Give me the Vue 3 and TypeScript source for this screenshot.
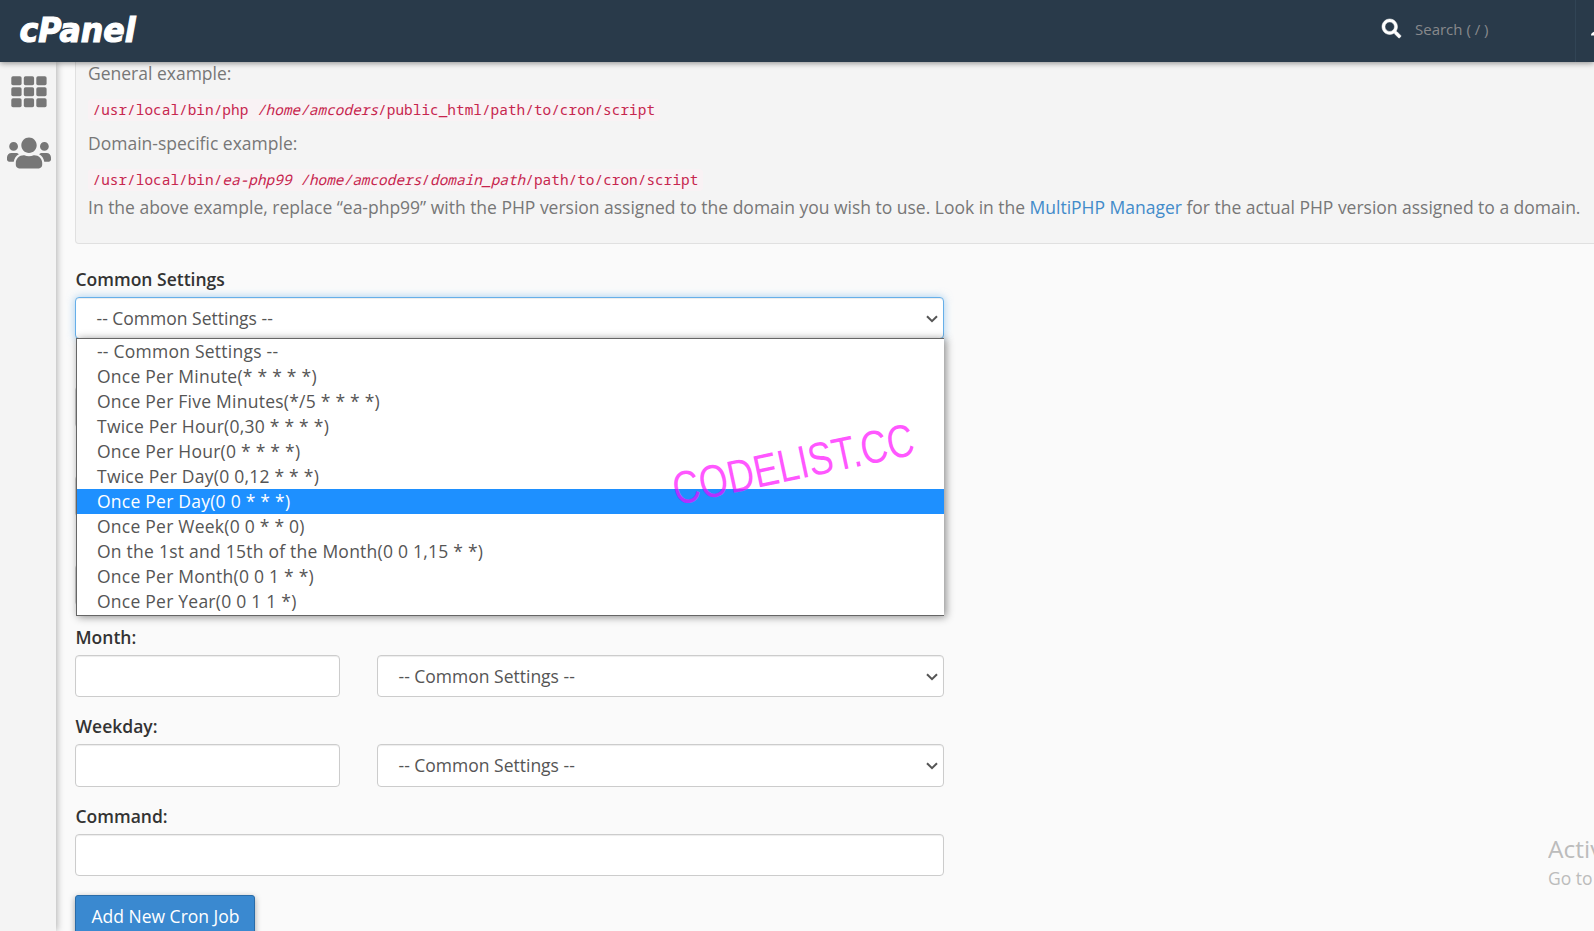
<script setup lang="ts">
const placeholder = '-- Common Settings --'

const options: string[] = [
  '-- Common Settings --',
  'Once Per Minute(* * * * *)',
  'Once Per Five Minutes(*/5 * * * *)',
  'Twice Per Hour(0,30 * * * *)',
  'Once Per Hour(0 * * * *)',
  'Twice Per Day(0 0,12 * * *)',
  'Once Per Day(0 0 * * *)',
  'Once Per Week(0 0 * * 0)',
  'On the 1st and 15th of the Month(0 0 1,15 * *)',
  'Once Per Month(0 0 1 * *)',
  'Once Per Year(0 0 1 1 *)',
]
const highlighted = 6
</script>

<template>
  <div class="page">
    <header class="topbar">
      <svg class="logo" width="130" height="40" viewBox="0 0 130 40" role="img" aria-label="cPanel">
        <text x="1.500" y="31.500" textLength="116" lengthAdjust="spacingAndGlyphs">cPanel</text>
      </svg>
      <div class="search">
        <svg width="19" height="19" viewBox="0 0 512 512"><path fill="#fff" stroke="#fff" stroke-width="14" d="M505 442.7L405.3 343c-4.500-4.500-10.600-7-17-7H372c27.600-35.300 44-79.700 44-128C416 93.100 322.900 0 208 0S0 93.100 0 208s93.100 208 208 208c48.300 0 92.700-16.400 128-44v16.300c0 6.400 2.500 12.500 7 17l99.700 99.700c9.400 9.400 24.600 9.400 33.900 0l28.300-28.300c9.400-9.400 9.400-24.600.1-34zM208 336c-70.700 0-128-57.200-128-128 0-70.700 57.200-128 128-128 70.700 0 128 57.200 128 128 0 70.700-57.200 128-128 128z" /></svg>
        <span>Search ( / )</span>
      </div>
      <div class="account">
        <svg width="19" height="19" viewBox="0 0 19 19"><path fill="#fff" d="M0 18.500C0 16 2.500 15 7 13C6 11 5 9 5 6a4.500 5 0 0 1 9 0c0 3-1 5-2 7c4.500 2 7 3 7 5.500z" /></svg>
      </div>
    </header>

    <div class="body">
      <nav class="sidebar">
        <svg class="grid-icon" width="36" height="32" viewBox="0 0 36 32" fill="#777">
          <template v-for="r in 3" :key="r">
            <rect v-for="c in 3" :key="c" :x="(c - 1) * 12.5 + 0.3" :y="(r - 1) * 11 + 0.3" width="10.3" height="9" rx="1.700" />
          </template>
        </svg>
        <svg class="users-icon" width="44" height="36" viewBox="0 0 640 512"><path fill="#777" d="M96 224c35.300 0 64-28.700 64-64s-28.700-64-64-64-64 28.700-64 64 28.700 64 64 64zm448 0c35.300 0 64-28.700 64-64s-28.700-64-64-64-64 28.700-64 64 28.700 64 64 64zm32 32h-64c-17.600 0-33.500 7.100-45.100 18.600 40.300 22.100 68.900 62 75.100 109.400h66c17.700 0 32-14.300 32-32v-32c0-35.300-28.700-64-64-64zm-256 0c61.900 0 112-50.100 112-112S381.900 32 320 32 208 82.100 208 144s50.100 112 112 112zm76.800 32h-8.300c-20.800 10-43.900 16-68.500 16s-47.600-6-68.500-16h-8.300C179.600 288 128 339.600 128 403.200V432c0 26.500 21.500 48 48 48h288c26.500 0 48-21.500 48-48v-28.800c0-63.600-51.600-115.200-115.200-115.200zm-223.700-13.400C161.500 263.100 145.600 256 128 256H64c-35.300 0-64 28.700-64 64v32c0 17.700 14.300 32 32 32h65.900c6.300-47.400 34.900-87.300 75.200-109.400z" /></svg>
      </nav>

      <main class="content">
        <section class="well">
          <p class="line first">General example:</p>
          <div class="code-row"><code>/usr/local/bin/php <em>/home/amcoders</em>/public_html/path/to/cron/script</code></div>
          <p class="line">Domain-specific example:</p>
          <div class="code-row second"><code>/usr/local/bin/<em>ea-php99</em> <em>/home/amcoders</em>/<em>domain_path</em>/path/to/cron/script</code></div>
          <p class="line note">In the above example, replace “ea-php99” with the PHP version assigned to the domain you wish to use. Look in the <a>MultiPHP Manager</a> for the actual PHP version assigned to a domain.</p>
        </section>

        <form class="form" @submit.prevent>
          <label class="label">Common Settings</label>
          <div class="picker">
            <div class="control select focused">
              <span>{{ placeholder }}</span>
              <svg class="chev" width="12" height="8" viewBox="0 0 12 8"><path d="M1 1.200L6 6.200L11 1.200" /></svg>
            </div>
            <ul class="menu">
              <li v-for="(o, i) in options" :key="o" :class="{ on: i === highlighted }">{{ o }}</li>
            </ul>
            <div class="stub s1"></div>
            <div class="stub s2"></div>
            <div class="stub s3"></div>
          </div>

          <label class="label month">Month:</label>
          <div class="row">
            <div class="control"></div>
            <div class="control select">
              <span>{{ placeholder }}</span>
              <svg class="chev" width="12" height="8" viewBox="0 0 12 8"><path d="M1 1.200L6 6.200L11 1.200" /></svg>
            </div>
          </div>

          <label class="label weekday">Weekday:</label>
          <div class="row tall">
            <div class="control"></div>
            <div class="control select">
              <span>{{ placeholder }}</span>
              <svg class="chev" width="12" height="8" viewBox="0 0 12 8"><path d="M1 1.200L6 6.200L11 1.200" /></svg>
            </div>
          </div>

          <label class="label command">Command:</label>
          <div class="control"></div>
          <button class="submit">Add New Cron Job</button>
        </form>
      </main>
    </div>

    <div class="stamp">CODELIST.CC</div>
    <div class="activate">
      <div class="big">Activate Windows</div>
      <div class="small">Go to Settings to activate Windows.</div>
    </div>
  </div>
</template>

<style>
body {
  overflow: hidden;
}
</style>

<style scoped>
.page {
  position: relative;
  width: 1594px;
  height: 931px;
  overflow: hidden;
  background: #fafafa;
  font-family: 'Open Sans', 'Noto Sans', sans-serif;
  font-size: 17.5px;
  color: #555;
}
.page * {
  box-sizing: border-box;
}
.topbar {
  position: relative;
  z-index: 3;
  display: flex;
  height: 62px;
  background: #293a4a;
  box-shadow: 0 1px 6px rgba(0, 0, 0, 0.45);
}
.logo {
  flex: none;
  margin: 10px 0 0 18px;
}
.logo text {
  font-family: 'DejaVu Sans', sans-serif;
  font-weight: 700;
  font-style: italic;
  font-size: 33px;
  fill: #fff;
  stroke: #fff;
  stroke-width: 1.2px;
}
.search {
  display: flex;
  align-items: flex-start;
  width: 193px;
  margin-left: auto;
  padding-top: 19px;
}
.search svg {
  overflow: visible;
}
.search span {
  margin-left: 14px;
  margin-top: -1px;
  font-size: 15px;
  line-height: 22px;
  color: #88898c;
}
.account {
  flex: none;
  width: 19px;
  padding: 17px 0 0 15px;
  overflow: hidden;
  border-left: 1px solid #314455;
}
.body {
  display: flex;
  height: 869px;
}
.sidebar {
  position: relative;
  z-index: 2;
  display: flex;
  flex: none;
  flex-direction: column;
  align-items: center;
  width: 56px;
  padding-left: 1px;
  background: #f4f4f4;
  box-shadow: 1px 0 7px rgba(0, 0, 0, 0.3);
}
.grid-icon {
  margin: 14px 0 0 1px;
}
.users-icon {
  margin-top: 27px;
}
.content {
  flex: none;
  width: 1538px;
  padding-left: 19px;
}
.well {
  width: 1600px;
  height: 182px;
  padding-left: 12px;
  background: #f4f4f4;
  border: 1px solid #e0e0e0;
  border-top: 0;
  border-radius: 0 0 4px 4px;
  color: #777;
}
.line {
  margin: 0;
  line-height: 24px;
  white-space: nowrap;
}
.first {
  line-height: 22px;
}
.note {
  letter-spacing: -0.012px;
}
.code-row {
  height: 47px;
  padding-top: 12px;
}
code {
  display: inline-block;
  height: 22px;
  padding: 0 5px 0 4.5px;
  background: #f9f2f4;
  border-radius: 4px;
  font-family: 'Noto Sans Mono', 'DejaVu Sans Mono', monospace;
  font-size: 14.4px;
  line-height: 22px;
  letter-spacing: 0.02px;
  white-space: pre;
  color: #c7254e;
}
.second {
  height: 40px;
  padding-top: 11px;
}
.line a {
  color: #428bca;
}
.form {
  width: 869px;
  padding-top: 23px;
}
.label {
  display: block;
  height: 30px;
  padding-left: 0.5px;
  line-height: 24px;
  font-weight: 600;
  color: #333;
}
.control {
  position: relative;
  height: 42px;
  background: #fff;
  border: 1px solid #ccc;
  border-radius: 4px;
  box-shadow: inset 0 1px 1px rgba(0, 0, 0, 0.075);
}
.select {
  display: flex;
  align-items: center;
  justify-content: space-between;
  padding: 0 5px 0 20.5px;
}
.focused {
  border-color: #66afe9;
  box-shadow: inset 0 1px 1px rgba(0, 0, 0, 0.075), 0 0 8px rgba(102, 175, 233, 0.6);
}
.chev {
  margin-top: 1px;
  fill: none;
  stroke: #555;
  stroke-width: 2px;
}
.picker {
  position: relative;
  height: 328px;
}
.menu {
  position: absolute;
  z-index: 1;
  top: 41px;
  left: 1px;
  width: 868px;
  height: 278px;
  margin: 0;
  padding: 0;
  list-style: none;
  background: #fff;
  border: 1px solid #666;
  border-right: 0;
  box-shadow: 2px 1px 8px rgba(0, 0, 0, 0.45);
}
.menu li {
  height: 25px;
  padding-left: 20px;
  line-height: 25px;
  letter-spacing: 0.24px;
}
.menu .on {
  background: #1e90ff;
  color: #fff;
}
.stub {
  position: absolute;
  left: 0;
  width: 20px;
  height: 42px;
  border: 1px solid #ccc;
  border-radius: 4px;
}
.s1 {
  top: 89px;
}
.s2 {
  top: 178px;
}
.s3 {
  top: 267px;
}
.row {
  display: grid;
  grid-template-columns: 265px 567px;
  gap: 37px;
}
.weekday,
.command {
  margin-top: 17px;
}
.tall .control {
  height: 43px;
  padding-bottom: 1px;
}
.submit {
  display: block;
  width: 180px;
  height: 44px;
  margin-top: 19px;
  padding: 0 0 2px 1px;
  background: #3a89d0;
  border: 1px solid #2a6ca8;
  border-radius: 3px;
  box-shadow: 0 2px 6px rgba(0, 0, 0, 0.35);
  font: inherit;
  color: #fff;
}
.stamp {
  position: absolute;
  z-index: 4;
  top: 438px;
  left: 670px;
  display: flex;
  justify-content: center;
  width: 246px;
  font-family: 'Liberation Sans', sans-serif;
  font-size: 46px;
  line-height: 52px;
  white-space: nowrap;
  color: rgba(255, 0, 255, 0.66);
  transform: rotate(-12deg) scaleX(0.808);
}
.activate {
  position: absolute;
  top: 831px;
  left: 1548px;
  width: 46px;
  overflow: hidden;
  font-family: 'Open Sans', sans-serif;
  white-space: nowrap;
  color: #bcbcbc;
}
.big {
  font-size: 24.5px;
  line-height: 35px;
}
.small {
  font-size: 17.5px;
  line-height: 24px;
}
</style>
